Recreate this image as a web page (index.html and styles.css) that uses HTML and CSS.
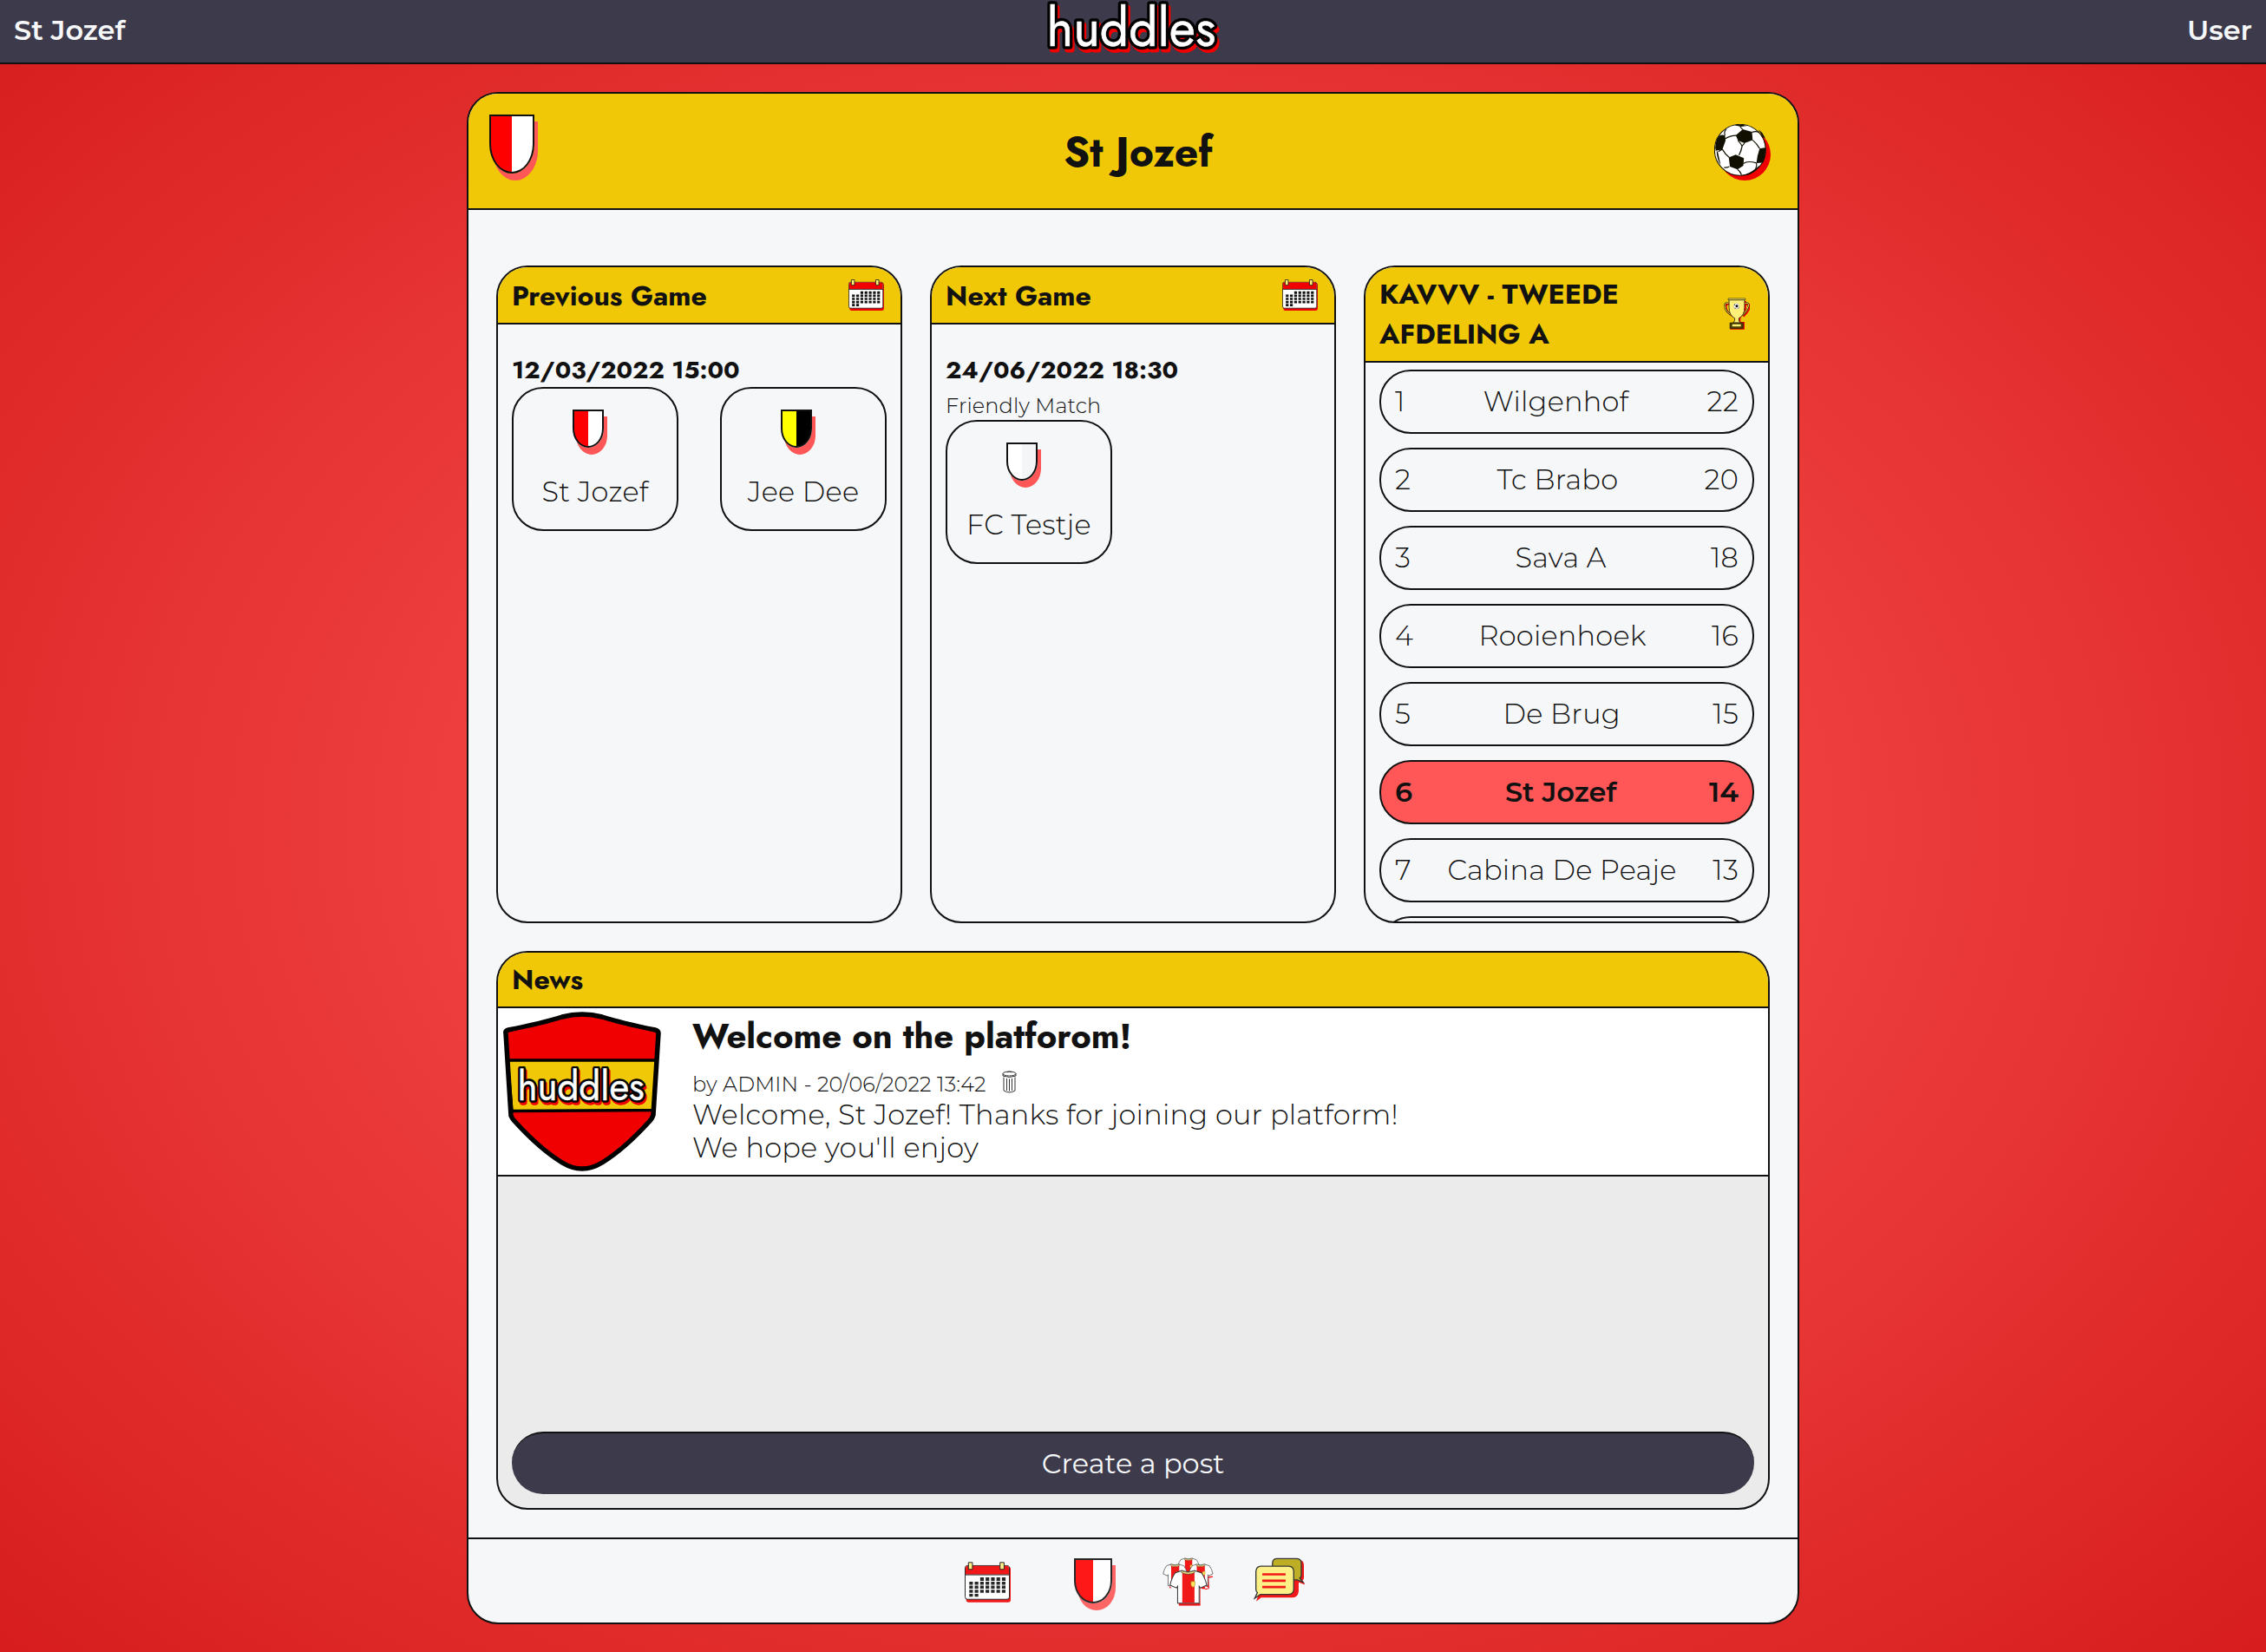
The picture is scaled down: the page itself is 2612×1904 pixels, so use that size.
FILE: index.html
```
<!DOCTYPE html>
<html lang="en">
<head>
<meta charset="utf-8">
<title>huddles - St Jozef</title>
<link rel="stylesheet" href="styles.css">
</head>
<body>
<svg class="sprite" aria-hidden="true">
  <defs>
    <symbol id="calendar" viewBox="65 120 160 141">
      <rect x="70" y="136" width="155" height="125" rx="9" fill="#f00000"/>
      <rect x="66.5" y="133" width="154" height="117" rx="8" fill="#fff" stroke="#111" stroke-width="3"/>
      <path d="M68 164V141q0-7 7-7H212q7 0 7 7V164z" fill="#f00000"/>
      <path d="M67 165H220" stroke="#111" stroke-width="3"/>
      <path d="M119 180H208" stroke="#111" stroke-width="12" stroke-dasharray="12.5 6.4"/>
      <path d="M81 194H208M81 208H208M81 222H208" stroke="#111" stroke-width="10.5" stroke-dasharray="12.5 6.4"/>
      <path d="M81 236H114" stroke="#111" stroke-width="10" stroke-dasharray="12.5 6.4"/>
      <path d="M78 122h14v24h-14zM188 122h14v24h-14z" fill="#fff07a" stroke="#111" stroke-width="3"/>
    </symbol>
    <symbol id="wordmark" viewBox="0 0 200 64">
      <g font-family="Jost, Lato, sans-serif" font-size="61" font-weight="400" stroke-linejoin="round">
        <text x="3" y="56.500" textLength="195" lengthAdjust="spacingAndGlyphs" fill="#f00000" stroke="#f00000" stroke-width="7">huddles</text>
        <text x="0.500" y="52.500" textLength="195" lengthAdjust="spacingAndGlyphs" fill="#000" stroke="#000" stroke-width="7.500">huddles</text>
        <text x="0.500" y="52.500" textLength="195" lengthAdjust="spacingAndGlyphs" fill="#fff" stroke="#fff" stroke-width=".5">huddles</text>
      </g>
    </symbol>
  </defs>
</svg>

<nav class="navbar">
  <span class="nav-side">St Jozef</span>
  <svg class="nav-logo"><use href="#wordmark"/></svg>
  <span class="nav-side nav-user">User</span>
</nav>

<main class="card">
  <header class="card-header">
    <i class="shield shield-large red-white"></i>
    <h1>St Jozef</h1>
    <svg class="ball" viewBox="108 129 194 194">
      <circle cx="213" cy="234" r="89" fill="#f00000"/>
      <circle cx="197" cy="218" r="88" fill="#fff" stroke="#110f00" stroke-width="3"/>
      <g fill="#110f00">
        <path d="M182 168L206 147 238 156 240 184 212 195 190 186z"/>
        <path d="M122 172Q130 164 145 168L147 186 136 216 113 221Q108 195 122 172z"/>
        <path d="M158 244L182 234 210 246 208 272 188 285 162 275z"/>
        <path d="M264 213L284 210Q287 235 276 262L253 263 257 238z"/>
        <path d="M176 133Q198 127 222 135L200 138zM284 180q-8-22-24-32l14 24zM250 282q-20 18-50 24l16-1q30-4 50-35zM116 222q2 30 14 48l-10-46z"/>
      </g>
      <path d="M197 137Q200 142 206 148M238 157Q250 152 262 157M240 184Q256 198 264 213M212 195L202 206M190 186Q200 196 204 205Q202 220 193 236M204 205Q200 222 193 236M145 180Q162 168 184 168M136 216Q146 234 160 244M122 224Q130 218 136 216M160 275Q150 280 142 278M208 265Q222 254 253 263M188 285Q198 292 202 304M253 263Q256 272 250 284M145 168Q140 156 150 146" fill="none" stroke="#110f00" stroke-width="3.5"/>
    </svg>
  </header>

  <div class="card-body">
    <div class="panels">
      <section class="panel">
        <header class="panel-header game-header"><h2>Previous Game</h2><svg class="calendar-small"><use href="#calendar"/></svg></header>
        <div class="game">
          <h3>12/03/2022 15:00</h3>
          <div class="teams">
            <div class="team"><i class="shield red-white"></i><span>St Jozef</span></div>
            <div class="team"><i class="shield yellow-black"></i><span>Jee Dee</span></div>
          </div>
        </div>
      </section>

      <section class="panel">
        <header class="panel-header game-header"><h2>Next Game</h2><svg class="calendar-small"><use href="#calendar"/></svg></header>
        <div class="game">
          <h3>24/06/2022 18:30</h3>
          <p class="kind"><small>Friendly Match</small></p>
          <div class="teams">
            <div class="team"><i class="shield white-grey"></i><span>FC Testje</span></div>
          </div>
        </div>
      </section>

      <section class="panel">
        <header class="panel-header league"><h2>KAVVV - TWEEDE AFDELING A</h2>
          <svg class="trophy" viewBox="1282 160 90 112">
            <path d="M1308 172h52v29l-20 32v12h14v26h-50v-8h34v-8l-12-20q14-4 24-36z" fill="#f00000"/>
            <path d="M1303 184q-14-4-14 8q0 20 26 34M1359 184q14-4 13 8q-2 16-22 34" fill="none" stroke="#f00000" stroke-width="6"/>
            <path d="M1299 180q-14-4-14 8q0 20 26 34M1355 180q14-4 13 8q-2 16-22 34" fill="none" stroke="#2b2600" stroke-width="6"/>
            <path d="M1299 180q-14-4-14 8q0 20 26 34M1355 180q14-4 13 8q-2 16-22 34" fill="none" stroke="#f0d84c" stroke-width="3"/>
            <path d="M1300 168h54v26q0 28-20 38q-2 10 6 16h-26q8-6 6-16q-20-10-20-38z" fill="#fff07a" stroke="#2b2600" stroke-width="2.5"/>
            <path d="M1297 163h60v5h-60z" fill="#fff07a" stroke="#2b2600" stroke-width="2"/>
            <path d="M1303 248h46v20h-46z" fill="#4a3d00" stroke="#2b2600" stroke-width="2"/>
            <path d="M1311 253h30v8h-30z" fill="#fff07a"/>
            <circle cx="1326" cy="190" r="9.5" fill="#fff" stroke="#999" stroke-width="1.5"/>
            <path d="M1322 188l5-4 5 4-2 6h-6zM1317 185l3-3v6zM1331 197l3-3v4zM1319 197l3-2 1 4z" fill="#111"/>
          </svg>
        </header>
        <ol class="standings">
          <li><span>1</span><span>Wilgenhof</span><span>22</span></li>
          <li><span>2</span><span>Tc Brabo</span><span>20</span></li>
          <li><span>3</span><span>Sava A</span><span>18</span></li>
          <li><span>4</span><span>Rooienhoek</span><span>16</span></li>
          <li><span>5</span><span>De Brug</span><span>15</span></li>
          <li class="own"><span>6</span><span>St Jozef</span><span>14</span></li>
          <li><span>7</span><span>Cabina De Peaje</span><span>13</span></li>
          <li></li>
        </ol>
      </section>
    </div>

    <section class="news">
      <header class="panel-header"><h2>News</h2></header>
      <article class="post">
        <svg class="post-logo" viewBox="579 1166 184 185">
          <path d="M583 1189Q636 1176 654 1172Q671 1167 688 1172Q706 1176 758 1189L752 1286Q722 1320 694 1340Q671 1354 648 1340Q620 1320 591 1287z" fill="#f00000"/>
          <path d="M585 1222H757L753 1279.500L590 1280.500z" fill="#f0c808" stroke="#000" stroke-width="3.500"/>
          <path d="M583 1191Q582 1188 586 1187Q626 1179 648 1172Q671 1166 694 1172Q716 1179 755 1187Q759 1188 759 1191L753 1285Q752 1289 749 1292Q720 1324 694 1340Q671 1354 648 1340Q622 1324 593 1292Q590 1289 589 1286z" fill="none" stroke="#000" stroke-width="5.500"/>
          <use href="#wordmark" x="596" y="1229" width="150" height="48"/>
        </svg>
        <div class="post-text">
          <h2>Welcome on the platforom!</h2>
          <p class="byline"><small>by ADMIN - 20/06/2022 13:42</small><svg class="trash" viewBox="0 0 17 26"><g fill="none" stroke="#333" stroke-width="1"><ellipse cx="8.500" cy="3.500" rx="7.500" ry="2.500"/><path d="M1 3.500v2.500q7.500 3 15 0V3.500M5.500 1.800q3-1.500 6 0M2 7.500V23q6.500 4 13 0V7.500M5.500 9v14M8.500 9.500v14M11.500 9v14"/></g></svg></p>
          <p>Welcome, St Jozef! Thanks for joining our platform!</p>
          <p>We hope you'll enjoy</p>
        </div>
      </article>
      <button class="create">Create a post</button>
    </section>
  </div>

  <footer class="card-footer">
    <svg class="calendar-large"><use href="#calendar"/></svg>
    <i class="shield shield-medium red-white"></i>
    <svg class="shirts" viewBox="750 103 176 167">
      <defs>
        <g id="shirt">
          <path d="M-20 -60L-44 -52Q-56 -36 -62 -10L-40 0 -36 -6V52H38V-6L42 0 64 -10Q58 -36 46 -52L20 -60Q0 -52 -20 -60z" fill="#fff" stroke="#222" stroke-width="3"/>
          <path d="M-20 -57Q0 -49 22 -57V51H-20z" fill="#f00000"/>
          <path d="M-24 -60Q0 -48 24 -60L22 -53Q0 -42 -22 -53z" fill="#fff07a" stroke="#222" stroke-width="2"/>
          <path d="M10 -22h14v10q-2 8-7 10q-6-2-7-10z" fill="#ffe14a" stroke="#8a7500" stroke-width="1.500"/>
        </g>
      </defs>
      <path d="M781 208l-6 1-2-8M893 170l30-3v4l-14 3 2 36-14 4zM806 262h72v-56l10 6 22-4-10-6-20 4v62h-72z" fill="#f00000"/>
      <use href="#shirt" transform="translate(839 142) scale(.6)"/>
      <use href="#shirt" transform="translate(793 166) scale(.66)"/>
      <use href="#shirt" transform="translate(881 166) scale(.66)"/>
      <path d="M806 265h73" stroke="#f00000" stroke-width="7"/>
      <use href="#shirt" transform="translate(838 208)"/>
    </svg>
    <svg class="chat" viewBox="1066 107 179 152">
      <path d="M1150 116h74q15 2 15 17v44q0 6-5 9l9 15-22-8v30q-2 21-20 22H1092l-17 13 6-18z" fill="#f00000"/>
      <path d="M1145 111h70q15 1 15 16v42q0 5-5 9l11 14-20-8h-70q-15-2-15-16V127q0-15 14-16z" fill="#b8a70f" stroke="#222" stroke-width="4"/>
      <path d="M1091 137H1187q17 1 17 18v60q0 18-18 19H1089l-19 13 9-19q-5-4-5-12V155q1-17 17-18z" fill="#fff07a" stroke="#222" stroke-width="4"/>
      <path d="M1096 165h80M1096 187h80M1096 209h80" stroke="#f00000" stroke-width="8"/>
    </svg>
  </footer>
</main>
</body>
</html>
```
FILE: styles.css
```
* { box-sizing: border-box; }

body {
  margin: 0;
  height: 1904px;
  overflow: hidden;
  color: #111;
  font: 300 32px/1.2 Montserrat, "Open Sans", sans-serif;
  letter-spacing: .24px;
  background: radial-gradient(#ff5757, #d71d1d);
}

h1, h2, h3, p, ol { margin: 0; padding: 0; }
h1, h2, h3 {
  font-family: Jost, Lato, sans-serif;
  font-weight: 700;
  line-height: 1.445;
  letter-spacing: 0;
}
h1 { font-size: 48px; }
h2 { font-size: 32px; }
h3 { font-size: 28px; }
small { font-size: 24px; letter-spacing: .14px; }
svg { display: block; flex: none; }
.sprite { position: absolute; width: 0; height: 0; }

.navbar {
  display: grid;
  grid-template-columns: 1fr auto 1fr;
  align-items: center;
  height: 74px;
  padding: 0 16px;
  border-bottom: 2px solid #111;
  background: #3d3a4b;
  color: #f6f7f9;
}
.nav-side { padding-bottom: 2px; font-weight: 600; letter-spacing: 0; }
.nav-user { text-align: right; }
.nav-logo { width: 200px; height: 64px; align-self: start; letter-spacing: 0; }

.card {
  display: flex;
  flex-direction: column;
  width: 1536px;
  height: 1766px;
  margin: 32px auto 0;
  border: 2px solid #111;
  border-radius: 36px;
  background: #f6f7f9;
  overflow: hidden;
}
.card-header {
  display: grid;
  grid-template-columns: 1fr auto 1fr;
  align-items: center;
  height: 134px;
  padding: 0 31px 0 24px;
  border-bottom: 2px solid #111;
  background: #f0c808;
}
.card-header h1 { margin-left: 19px; padding-top: 3px; }
.shield-large { margin-bottom: 16px; }
.ball { width: 65px; height: 65px; justify-self: end; margin-bottom: -3px; }

.shield {
  display: block;
  flex: none;
  width: 36px;
  height: 44px;
  border: 2px solid #111;
  border-radius: 0 0 50% 50%;
  box-shadow: 4px 8px 0 #ff5757;
}
.shield-large { width: 52px; height: 68px; }
.shield-medium { width: 44px; height: 52px; }
.red-white { background: linear-gradient(90deg, #f00 50%, #fff 50%); }
.yellow-black { background: linear-gradient(90deg, #ff0 50%, #000 50%); }
.white-grey { background: linear-gradient(90deg, #fff 50%, #f3f5f7 50%); }

.card-body {
  flex: 1;
  display: flex;
  flex-direction: column;
  gap: 32px;
  padding: 64px 32px 32px;
}
.panels { display: grid; grid-template-columns: repeat(3, 1fr); gap: 32px; height: 758px; }
.panel, .news {
  display: flex;
  flex-direction: column;
  border: 2px solid #111;
  border-radius: 36px;
  overflow: hidden;
}
.panel-header {
  display: flex;
  align-items: center;
  justify-content: space-between;
  flex: none;
  height: 66px;
  padding: 0 16px;
  border-bottom: 2px solid #111;
  background: #f0c808;
}
.game-header h2 { padding-top: 2px; }
.panel-header.league { height: 110px; padding-right: 21px; }
.league h2 { width: 320px; }
.calendar-small { width: 41px; height: 36px; margin-right: 3px; }
.trophy { width: 30px; height: 37px; margin-bottom: 1px; }

.game { padding: 33px 16px; }
.game h3 { height: 39px; }
.kind { height: 38px; }
.teams { display: flex; justify-content: space-between; }
.team {
  display: flex;
  flex-direction: column;
  align-items: center;
  justify-content: space-between;
  width: 192px;
  height: 166px;
  padding: 24px 0;
  border: 2px solid #111;
  border-radius: 36px;
}
.team .shield { margin-right: 16px; }

.standings {
  display: flex;
  flex-direction: column;
  gap: 16px;
  padding: 8px 16px 0;
  min-height: 0;
  list-style: none;
}
.standings li {
  display: flex;
  flex: none;
  align-items: center;
  justify-content: space-between;
  height: 74px;
  padding: 0 16px;
  border: 2px solid #111;
  border-radius: 36px;
}
.standings .own { background: #ff5757; font-weight: 600; letter-spacing: 0; }

.news { flex: 1; background: #ebebeb; }
.news .panel-header { height: 64px; }
.post {
  display: flex;
  height: 194px;
  padding: 4px 5px 0;
  border-bottom: 2px solid #111;
  background: #fff;
}
.post-logo { width: 184px; height: 185px; letter-spacing: 0; }
.post-text { margin-left: 35px; }
.post-text h2 { margin: 0 0 4px; font-size: 40px; }
.byline { display: flex; height: 38px; }
.byline small { line-height: 43px; }
.trash { width: 17px; height: 26px; margin: 6px 0 0 18px; }
.create {
  height: 72px;
  margin: auto 16px 16px;
  border: 0;
  border-top: 2px solid #111;
  border-radius: 36px;
  background: #3d3a4b;
  color: #f6f7f9;
  font: 400 32px/1.2 Montserrat, "Open Sans", sans-serif;
}

.card-footer {
  display: flex;
  height: 98px;
  padding: 21px 0 0 572px;
  border-top: 2px solid #111;
}
.card-footer > * { opacity: .9; }
.calendar-large { width: 53px; height: 47px; margin-top: 5px; }
.card-footer .shield { margin: 1px 58px 0 73px; }
.shirts { width: 59px; height: 56px; }
.chat { width: 60px; height: 51px; margin-left: 46px; }
```
